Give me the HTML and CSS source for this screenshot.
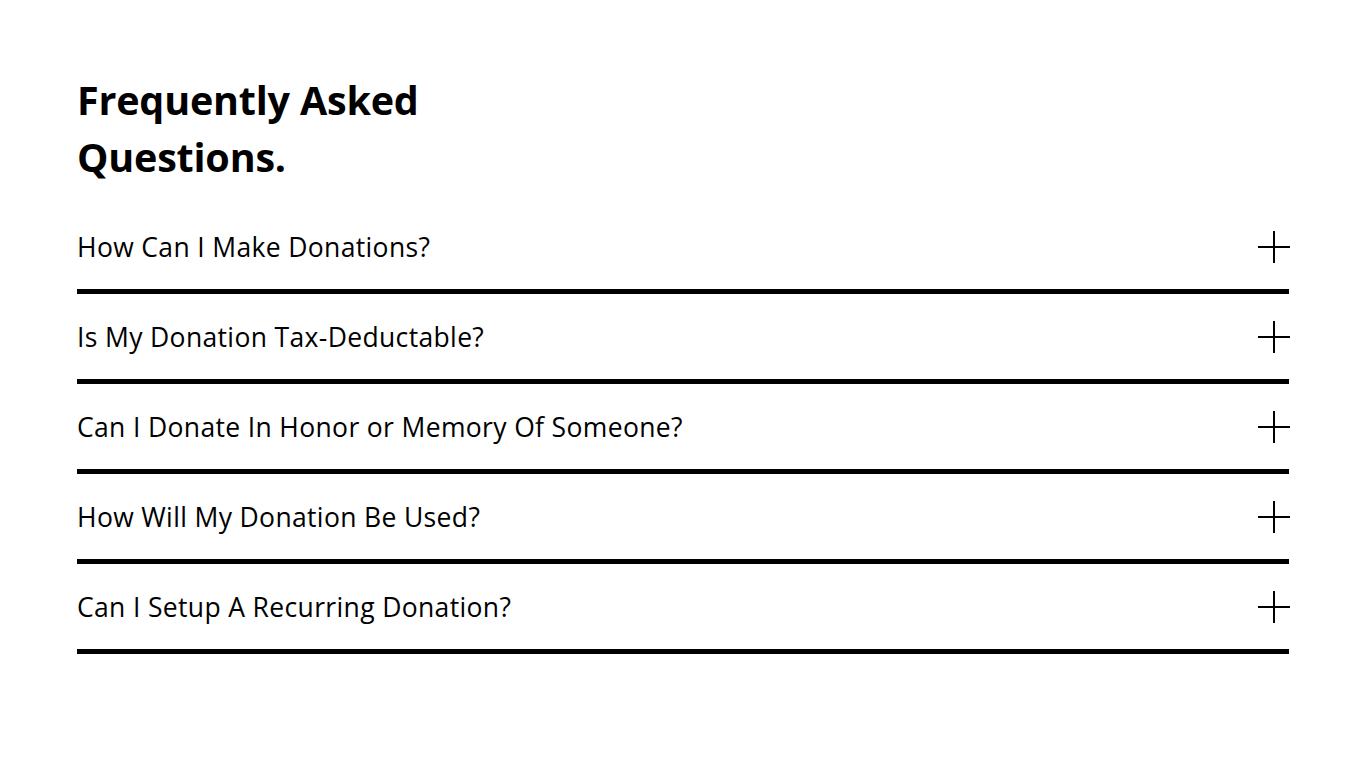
FILE: index.html
```html
<!DOCTYPE html>
<html>
<head>
<meta charset="utf-8">
<link rel="stylesheet" href="styles.css">
</head>
<body>
<main class="faq">
  <h1 class="faq-title">Frequently Asked<br>Questions.</h1>
  <ul class="faq-list">
    <li class="faq-item"><span class="q">How Can I Make Donations?</span><span class="plus"></span></li>
    <li class="faq-item"><span class="q">Is My Donation Tax-Deductable?</span><span class="plus"></span></li>
    <li class="faq-item"><span class="q">Can I Donate In Honor or Memory Of Someone?</span><span class="plus"></span></li>
    <li class="faq-item"><span class="q">How Will My Donation Be Used?</span><span class="plus"></span></li>
    <li class="faq-item"><span class="q">Can I Setup A Recurring Donation?</span><span class="plus"></span></li>
  </ul>
</main>
</body>
</html>
```
FILE: styles.css
```css
* { box-sizing: border-box; }
html, body { margin: 0; padding: 0; background: #fff; }
body { font-family: "Open Sans", "Liberation Sans", sans-serif; color: #000; }
.faq { width: 1366px; height: 768px; padding: 72px 77px 0 77px; }
.faq-title {
  margin: 0;
  font-size: 39.5px;
  line-height: 57px;
  font-weight: 700;
  letter-spacing: -0.2px;
}
.faq-list { list-style: none; margin: 18px 0 0 0; padding: 0; }
.faq-item {
  display: flex;
  align-items: center;
  justify-content: space-between;
  height: 90px;
  border-bottom: 5px solid #000;
  padding-bottom: 0;
}
.q { font-size: 26.5px; letter-spacing: 0.35px; }
.plus { position: relative; width: 32px; height: 32px; margin-right: -1px; }
.plus::before, .plus::after { content: ""; position: absolute; background: #000; }
.plus::before { left: 0; right: 0; top: 15px; height: 2px; }
.plus::after { top: 0; bottom: 0; left: 15px; width: 2px; }
```
